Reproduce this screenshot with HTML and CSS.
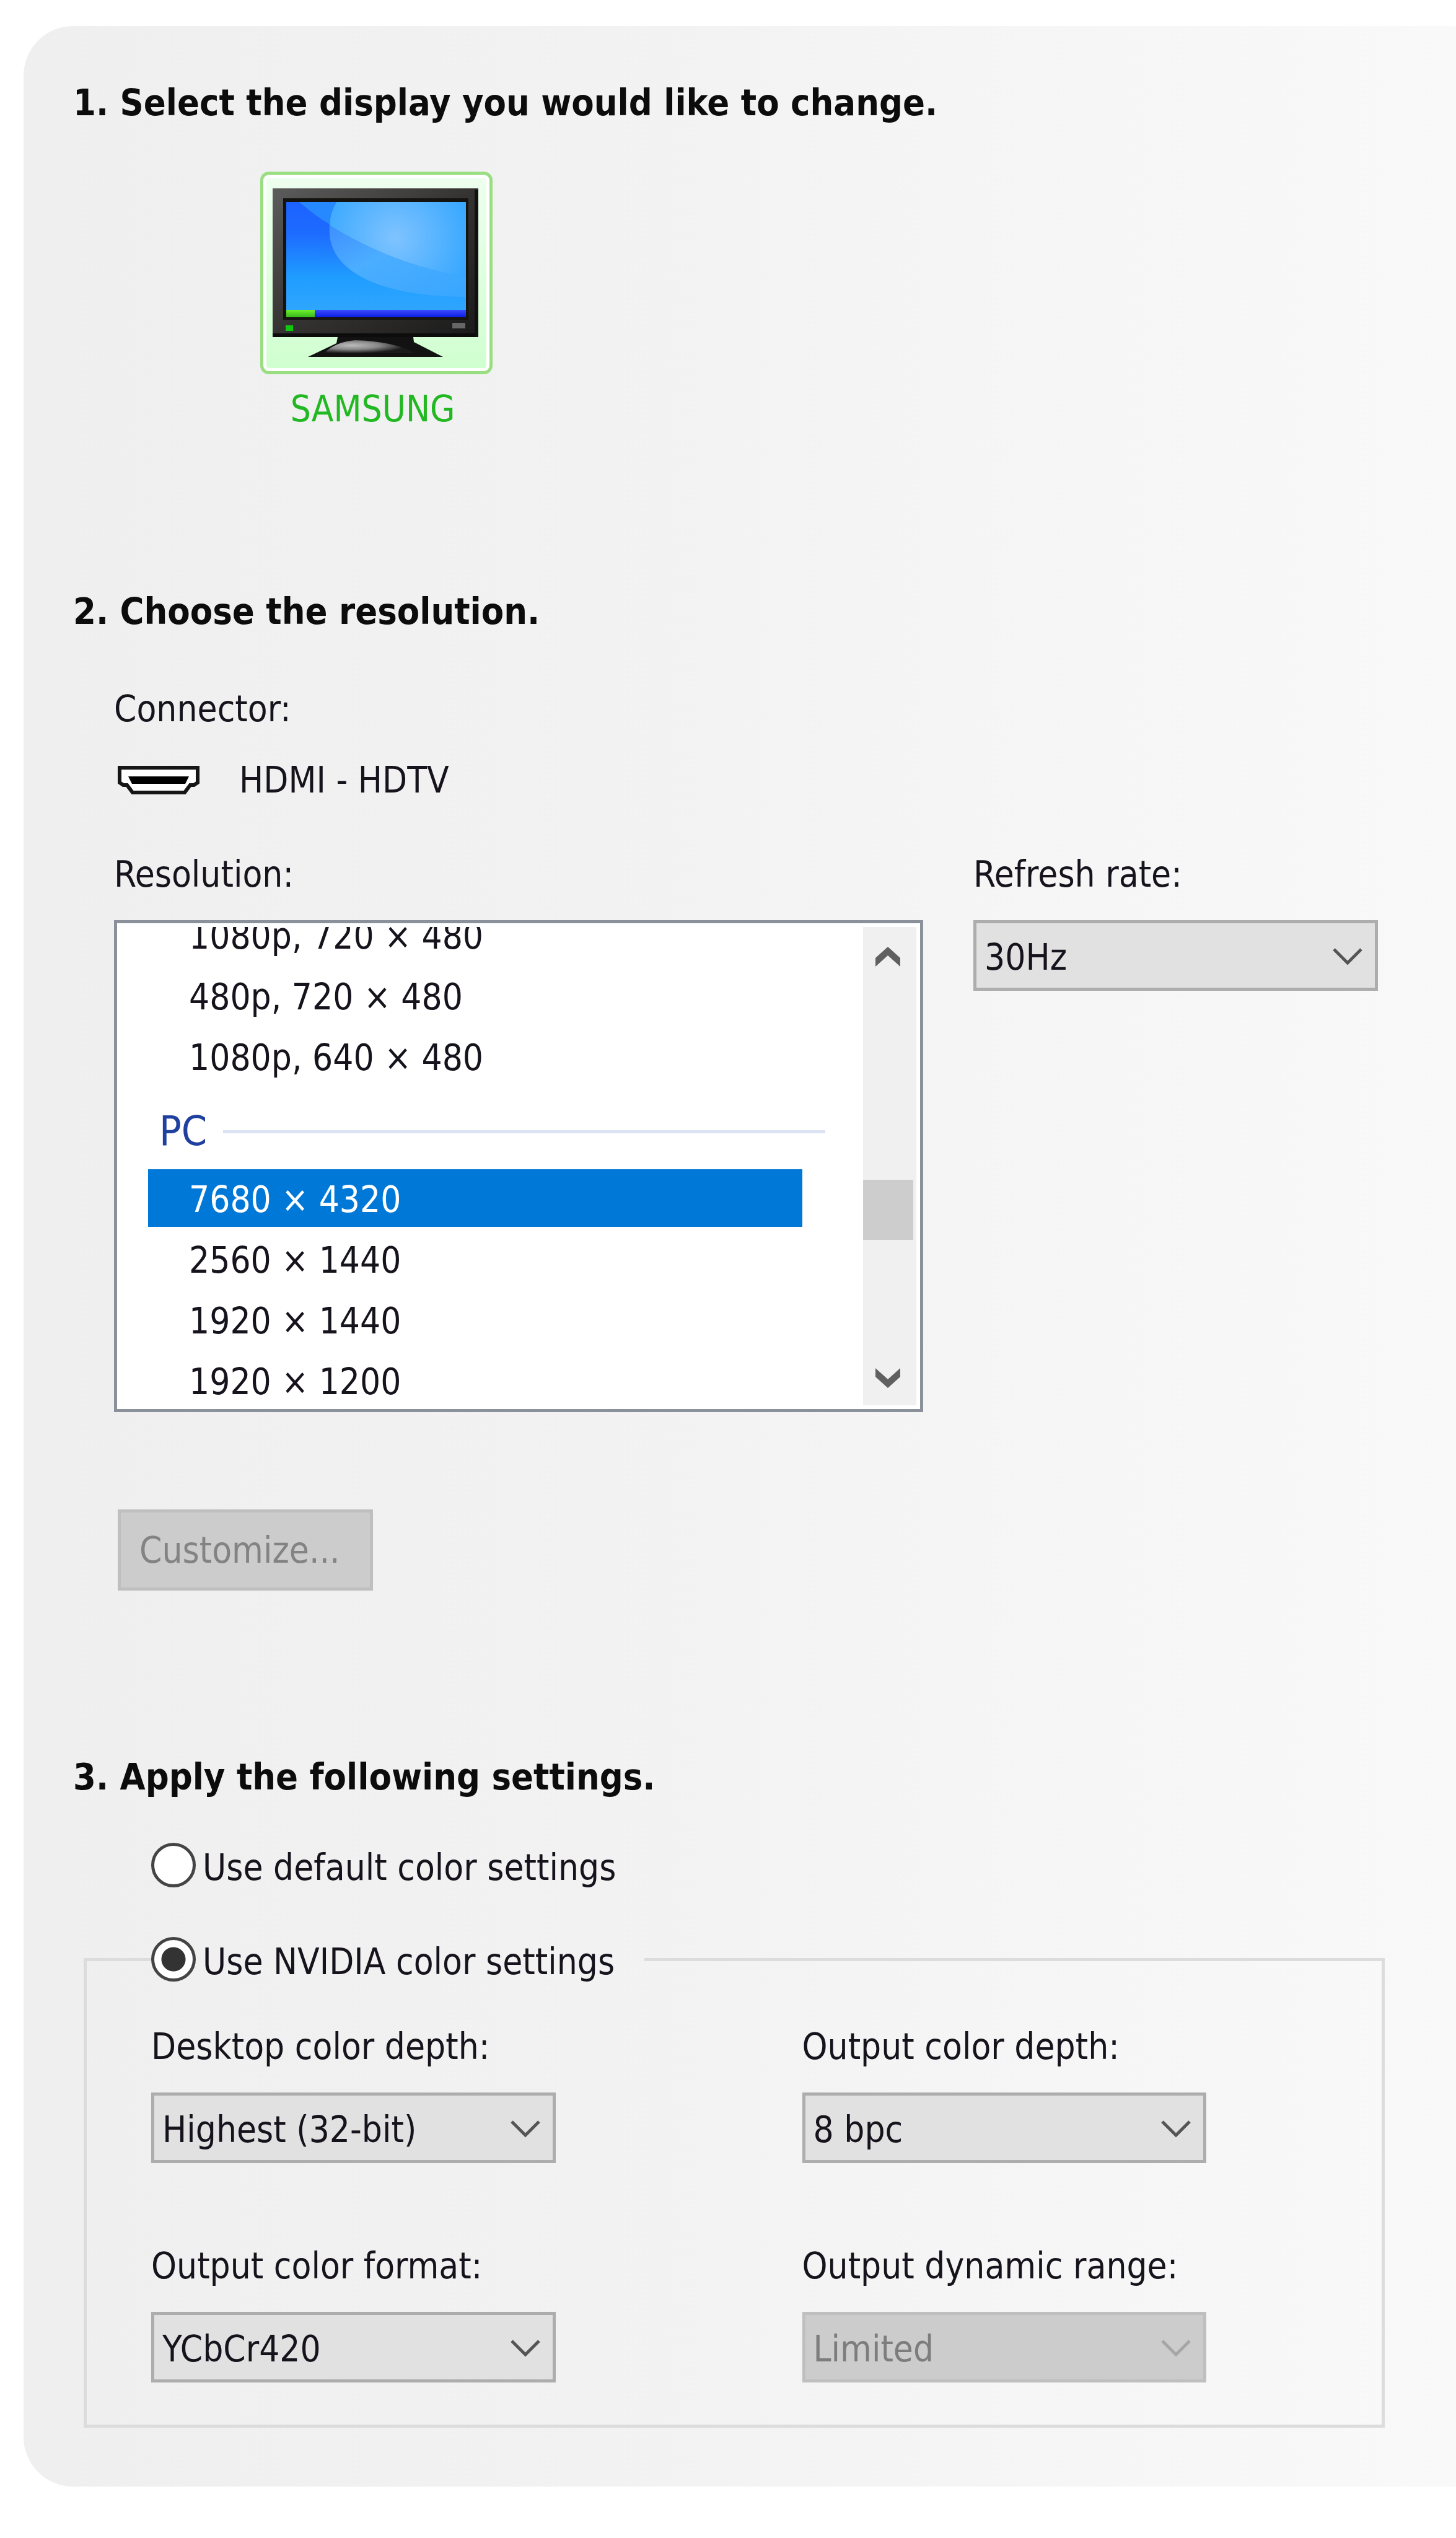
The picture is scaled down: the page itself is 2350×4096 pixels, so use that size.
FILE: index.html
```html
<!DOCTYPE html>
<html lang="en">
<head>
    <meta charset="UTF-8">
    <meta name="viewport" content="width=device-width, initial-scale=1.0">
    <title>Change Resolution</title>
    <link rel="stylesheet" href="styles.css">
</head>
<body>
    <form class="panel">
        <!-- Step 1: display -->
        <section class="step">
            <h2>1. Select the display you would like to change.</h2>
            <button class="display" type="button" aria-pressed="true">
                <span class="display-icon">
                    <svg viewBox="-3 -5 355 307" aria-hidden="true">
                        <defs>
                            <linearGradient id="frame" x1="0" y1="0" x2="1" y2="1">
                                <stop offset="0" stop-color="#5c5c5c"/>
                                <stop offset="0.5" stop-color="#353331"/>
                                <stop offset="1" stop-color="#1a1a1a"/>
                            </linearGradient>
                            <linearGradient id="sky" x1="0" y1="0" x2="0" y2="1">
                                <stop offset="0" stop-color="#1c62ff"/>
                                <stop offset="0.3" stop-color="#1e6cff"/>
                                <stop offset="0.7" stop-color="#1f9dff"/>
                                <stop offset="1" stop-color="#2ea6ff"/>
                            </linearGradient>
                            <radialGradient id="glow" gradientUnits="userSpaceOnUse" cx="205" cy="92" r="140">
                                <stop offset="0" stop-color="#7fc3ff"/>
                                <stop offset="1" stop-color="#2ea4ff"/>
                            </radialGradient>
                            <linearGradient id="lower" x1="0" y1="0" x2="1" y2="1">
                                <stop offset="0" stop-color="#3f8fff"/>
                                <stop offset="0.4" stop-color="#4baeff"/>
                                <stop offset="1" stop-color="#38a6ff"/>
                            </linearGradient>
                            <linearGradient id="bar" x1="0" y1="0" x2="0" y2="1">
                                <stop offset="0" stop-color="#3d4cff"/>
                                <stop offset="1" stop-color="#0a1ee0"/>
                            </linearGradient>
                            <linearGradient id="start" x1="0" y1="0" x2="0" y2="1">
                                <stop offset="0" stop-color="#6ff02c"/>
                                <stop offset="1" stop-color="#35b81c"/>
                            </linearGradient>
                            <radialGradient id="foot" cx="0.3" cy="0.4" r="0.6">
                                <stop offset="0" stop-color="#bcbcbc"/>
                                <stop offset="0.5" stop-color="#8a8a8a"/>
                                <stop offset="1" stop-color="#1a1a1a"/>
                            </radialGradient>
                        </defs>
                        <path d="M112 252 L234 252 L235 260 L282 284 L64 284 L110 262 Z" fill="#121212"/>
                        <path d="M90 278 Q108 260 140 257 Q198 258 238 278 Z" fill="url(#foot)"/>
                        <rect x="7" y="12" width="332" height="240" fill="url(#frame)"/>
                        <rect x="7" y="246" width="332" height="6" fill="#0c0c0c"/>
                        <rect x="333" y="14" width="6" height="238" fill="#111"/>
                        <rect x="24" y="28" width="299" height="196" fill="#15130f"/>
                        <rect x="29" y="34" width="290" height="174" fill="url(#sky)"/>
                        <path d="M50 34 Q75 56 99 70 Q99 52 110 34 Z" fill="#2689ff"/>
                        <path d="M110 34 Q99 52 99 72 C170 115 230 138 319 156 L319 34 Z" fill="url(#glow)"/>
                        <path d="M99 72 C170 115 230 138 319 156 L319 187 C190 187 92 150 99 72 Z" fill="url(#lower)"/>
                        <rect x="29" y="208" width="290" height="12" fill="url(#bar)"/>
                        <rect x="29" y="208" width="46" height="12" fill="url(#start)"/>
                        <rect x="28" y="233" width="12" height="9" fill="#10c810"/>
                        <rect x="297" y="229" width="21" height="9" fill="#666"/>
                    </svg>
                </span>
                <span class="display-name">SAMSUNG</span>
            </button>
        </section>

        <!-- Step 2: resolution -->
        <section class="step">
            <h2>2. Choose the resolution.</h2>
            <div class="step-body">
                <p class="caption">Connector:</p>
                <div class="connector">
                    <svg viewBox="0 0 132 46" aria-hidden="true">
                        <path d="M3 3 H129 V27 L123 31 H117 L108 43 H24 L15 31 H9 L3 27 Z" fill="#fff" stroke="#161616" stroke-width="6"/>
                        <path d="M17 17 H115 L109 29 H23 Z" fill="#000"/>
                    </svg>
                    <span>HDMI - HDTV</span>
                </div>

                <div class="modes">
                    <div class="field">
                        <span class="caption" id="resolution-label">Resolution:</span>
                        <div class="listbox">
                            <ul class="options" role="listbox" aria-labelledby="resolution-label" tabindex="0">
                                <li role="option">1080p, 720 × 480</li>
                                <li role="option">480p, 720 × 480</li>
                                <li role="option">1080p, 640 × 480</li>
                                <li class="group" role="presentation">PC</li>
                                <li class="selected" role="option" aria-selected="true">7680 × 4320</li>
                                <li role="option">2560 × 1440</li>
                                <li role="option">1920 × 1440</li>
                                <li role="option">1920 × 1200</li>
                            </ul>
                            <div class="scrollbar">
                                <button type="button" aria-label="Scroll up">
                                    <svg viewBox="0 0 40 32"><path d="M20 0 L40 18 V32 L20 14 L0 32 V18 Z" fill="#606060"/></svg>
                                </button>
                                <div class="track"><div class="thumb"></div></div>
                                <button type="button" aria-label="Scroll down">
                                    <svg viewBox="0 0 40 32"><path d="M20 32 L40 14 V0 L20 18 L0 0 V14 Z" fill="#606060"/></svg>
                                </button>
                            </div>
                        </div>
                    </div>

                    <div class="field">
                        <label class="caption" for="refresh">Refresh rate:</label>
                        <div class="combo">
                            <select id="refresh"><option>30Hz</option></select>
                            <svg viewBox="0 0 48 30" aria-hidden="true"><path d="M2 3 L24 25 L46 3"/></svg>
                        </div>
                    </div>
                </div>

                <button class="customize" type="button" disabled>Customize...</button>
            </div>
        </section>

        <!-- Step 3: color settings -->
        <section class="step">
            <h2>3. Apply the following settings.</h2>
            <label class="radio radio-default">
                <input type="radio" name="color">
                <span>Use default color settings</span>
            </label>
            <fieldset class="color-settings">
                <legend>
                    <label class="radio">
                        <input type="radio" name="color" checked>
                        <span>Use NVIDIA color settings</span>
                    </label>
                </legend>
                <div class="color-grid">
                    <div class="field">
                        <label class="caption" for="desktop-depth">Desktop color depth:</label>
                        <div class="combo">
                            <select id="desktop-depth"><option>Highest (32-bit)</option></select>
                            <svg viewBox="0 0 48 30" aria-hidden="true"><path d="M2 3 L24 25 L46 3"/></svg>
                        </div>
                    </div>
                    <div class="field">
                        <label class="caption" for="output-depth">Output color depth:</label>
                        <div class="combo">
                            <select id="output-depth"><option>8 bpc</option></select>
                            <svg viewBox="0 0 48 30" aria-hidden="true"><path d="M2 3 L24 25 L46 3"/></svg>
                        </div>
                    </div>
                    <div class="field">
                        <label class="caption" for="color-format">Output color format:</label>
                        <div class="combo">
                            <select id="color-format"><option>YCbCr420</option></select>
                            <svg viewBox="0 0 48 30" aria-hidden="true"><path d="M2 3 L24 25 L46 3"/></svg>
                        </div>
                    </div>
                    <div class="field">
                        <label class="caption" for="dynamic-range">Output dynamic range:</label>
                        <div class="combo">
                            <select id="dynamic-range" disabled><option>Limited</option></select>
                            <svg viewBox="0 0 48 30" aria-hidden="true"><path d="M2 3 L24 25 L46 3"/></svg>
                        </div>
                    </div>
                </div>
            </fieldset>
        </section>
    </form>
</body>
</html>
```
FILE: styles.css
```css
* {
    box-sizing: border-box;
}

body {
    margin: 0;
    padding: 42px 0 83px 38px;
    background: #fff;
    color: #16131c;
    font-family: "DejaVu Sans Condensed", "DejaVu Sans", sans-serif;
    font-size: 58px;
    line-height: 80px;
}

button, select, input {
    font: inherit;
    color: inherit;
    margin: 0;
}

.panel {
    padding: 84px 115px 95px 80px;
    border-radius: 80px 0 0 80px;
    background: linear-gradient(90deg, #efefef, #f2f2f2 40%, #f9f9f9);
}

h2 {
    margin: 0;
    font-size: 59px;
    line-height: 80px;
    color: #0c0c0c;
}

/* Display picker */
.display {
    display: flex;
    flex-direction: column;
    align-items: center;
    gap: 16px;
    margin: 71px 0 247px 302px;
    padding: 0;
    border: none;
    background: none;
    color: #22b822;
}

.display-icon {
    width: 375px;
    height: 327px;
    padding: 5px;
    border: 5px solid #9ade82;
    border-radius: 14px;
    background: linear-gradient(#eeffee, #d0ffd0) content-box, #fff;
}

.display-icon svg {
    display: block;
    width: 100%;
}

.display-name {
    padding-right: 12px;
    line-height: 80px;
}

/* Connector and resolution */
.step-body {
    padding: 77px 11px 261px 66px;
}

.caption {
    display: block;
    margin: 0;
}

.connector {
    display: flex;
    align-items: center;
    gap: 64px;
    margin: 35px 0 72px;
    padding-left: 6px;
}

.connector svg {
    width: 132px;
    height: 46px;
}

.modes {
    display: grid;
    grid-template-columns: 2fr 1fr;
    gap: 81px;
    align-items: start;
}

.field {
    display: flex;
    flex-direction: column;
    gap: 34px;
    min-width: 0;
}

.listbox {
    display: flex;
    height: 794px;
    padding: 6px;
    border: 5px solid #8b919b;
    background: #fff;
}

.options {
    flex: 1;
    margin: 0;
    padding: 0 98px 0 44px;
    overflow: hidden;
    list-style: none;
}

.options li {
    height: 93px;
    margin-bottom: 5px;
    padding: 9px 0 4px 66px;
}

/* list is scrolled part way into its first row */
.options li:first-child {
    margin-top: -34px;
}

.options .selected {
    background: #0078d7;
    color: #fff;
}

.options .group {
    display: flex;
    align-items: center;
    gap: 26px;
    height: 126px;
    margin-right: -37px;
    padding: 14px 0 0 18px;
    color: #20409f;
    font-size: 66px;
}

.options .group::after {
    content: "";
    flex: 1;
    height: 5px;
    background: #dbe3f3;
}

.scrollbar {
    display: flex;
    flex-direction: column;
    width: 86px;
    background: #f0f0f0;
}

.scrollbar button {
    display: flex;
    align-items: center;
    justify-content: center;
    height: 96px;
    padding: 0 6px 0 0;
    border: none;
    background: none;
}

.scrollbar button:last-child {
    padding-top: 8px;
}

.scrollbar svg {
    width: 40px;
    height: 32px;
}

.track {
    flex: 1;
    padding: 312px 5px 0 0;
}

.thumb {
    height: 97px;
    background: #cdcdcd;
}

/* Drop-downs */
.combo {
    display: grid;
    align-items: center;
}

.combo select {
    grid-area: 1 / 1;
    width: 100%;
    height: 114px;
    padding: 6px 80px 0 13px;
    border: 5px solid #adadad;
    border-radius: 0;
    background: #e1e1e1;
    appearance: none;
}

.combo svg {
    grid-area: 1 / 1;
    justify-self: end;
    width: 48px;
    height: 30px;
    margin: 4px 25px 0 0;
    fill: none;
    stroke: #555;
    stroke-width: 5px;
    pointer-events: none;
}

.combo select:disabled {
    border-color: #bfbfbf;
    background: #ccc;
    color: #7d7d7d;
    opacity: 1;
}

.combo select:disabled + svg {
    stroke: #a6a6a6;
}

.customize {
    height: 131px;
    margin: 157px 0 0 6px;
    padding: 0 48px 0 30px;
    border: 5px solid #bfbfbf;
    background: #ccc;
    color: #838383;
}

/* Color settings */
.radio {
    display: flex;
    align-items: center;
    gap: 11px;
    height: 80px;
}

.radio input {
    appearance: none;
    width: 72px;
    height: 72px;
    border: 5px solid #444;
    border-radius: 50%;
    background: #fff;
}

.radio input:checked {
    background: radial-gradient(circle, #333 19px, #fff 20px);
}

.radio span {
    padding-top: 8px;
}

.radio-default {
    margin: 62px 0 72px 126px;
}

.color-settings {
    margin: 0 0 0 17px;
    padding: 61px 283px 68px 104px;
    border: 5px solid #dcdcdc;
}

.color-settings legend {
    padding: 0 48px 0 0;
}

.color-grid {
    display: grid;
    grid-template-columns: 1fr 1fr;
    gap: 126px 398px;
}
```
